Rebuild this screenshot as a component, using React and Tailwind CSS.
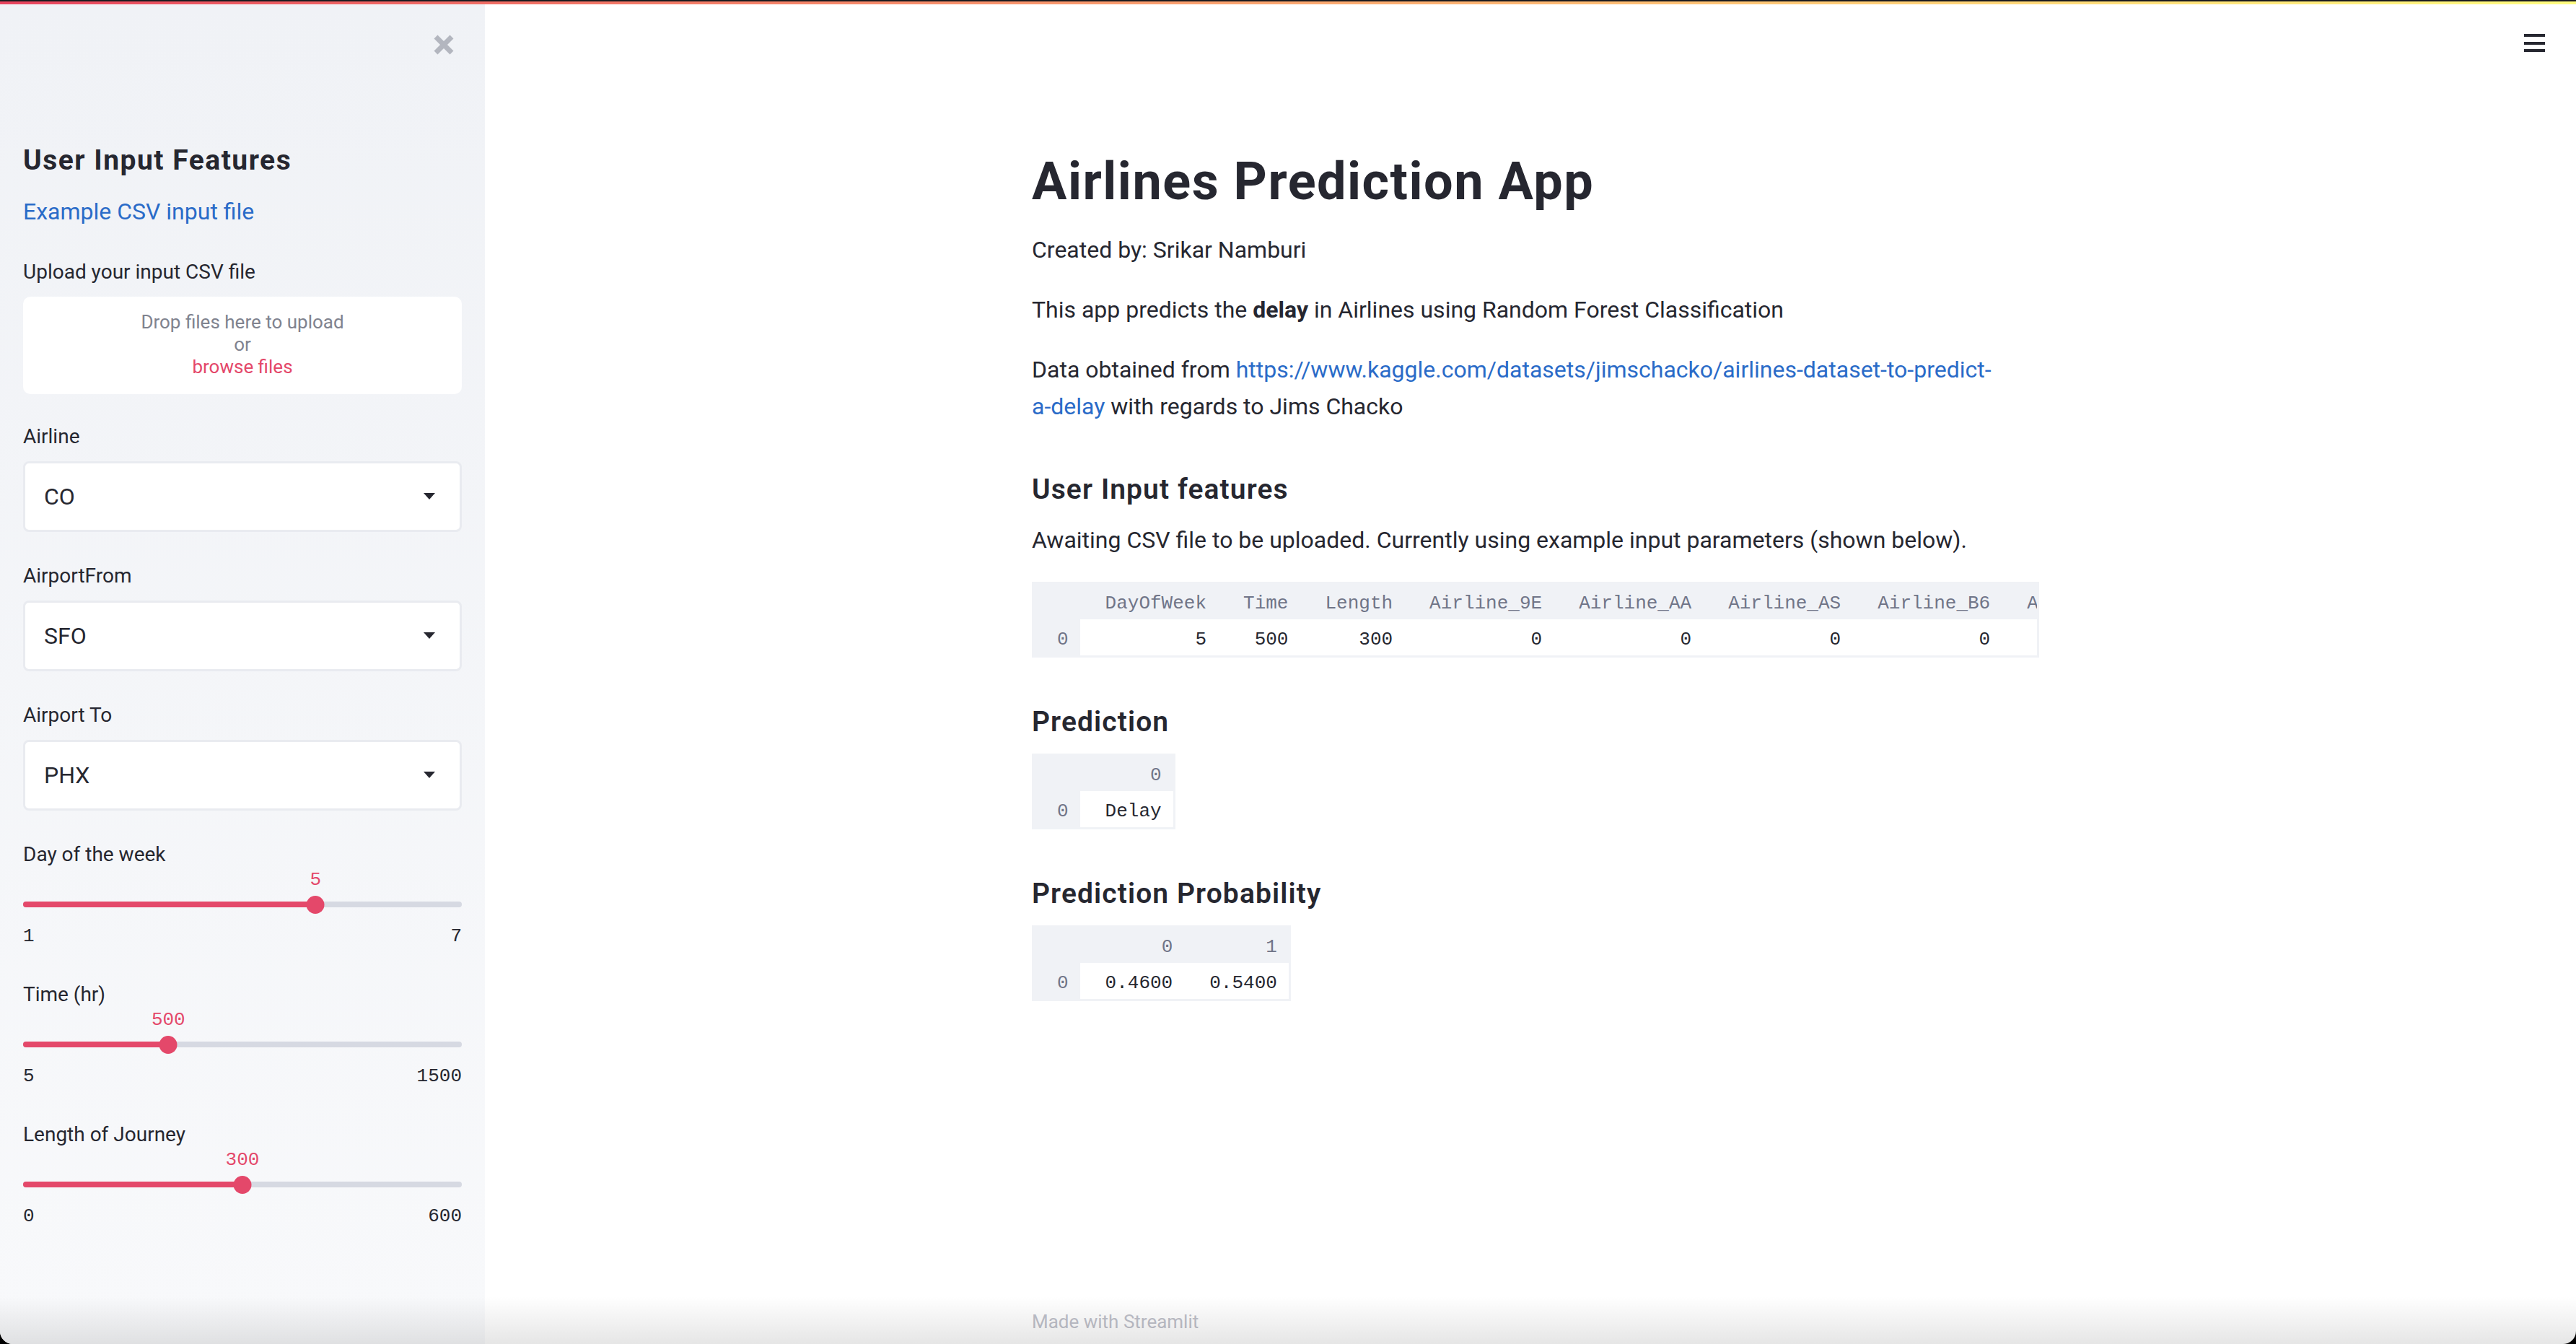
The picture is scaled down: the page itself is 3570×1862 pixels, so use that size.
const SANS = "font-['Roboto',_'Liberation_Sans',_sans-serif]";
const MONO = "font-['Liberation_Mono',_'DejaVu_Sans_Mono',_monospace]";

function CloseIcon() {
	return (
		<svg width="30" height="30" viewBox="0 0 30 30">
			<path d="M4 4 L26 26 M26 4 L4 26" stroke="#b3b6bf" strokeWidth="7" strokeLinecap="butt" />
		</svg>
	);
}

function Caret() {
	return (
		<svg width="16" height="10" viewBox="0 0 16 10">
			<path d="M0 0 H16 L8 9 Z" fill="#262730" />
		</svg>
	);
}

function SelectBox({ label, value }) {
	return (
		<div className="flex flex-col">
			<div className="text-[28px] leading-[36px] text-[#262730]">{label}</div>
			<div className="mt-[16px] h-[98px] rounded-[8px] border-[3px] border-[#e9ebf0] bg-white flex items-center justify-between pl-[26px] pr-[34px]">
				<span className="text-[32px] text-[#262730]">{value}</span>
				<Caret />
			</div>
		</div>
	);
}

function Slider({ label, value, min, max }) {
	const pct = ((value - min) / (max - min)) * 100;
	return (
		<div className="flex flex-col">
			<div className="text-[28px] leading-[36px] text-[#262730]">{label}</div>
			<div className="relative mt-[2px] h-[30px]">
				<span className={`absolute top-0 -translate-x-1/2 text-[26px] leading-[30px] text-[#e4486a] ${MONO}`} style={{ left: `${pct}%` }}>
					{value}
				</span>
			</div>
			<div className="relative mt-[7px] h-[24px] flex items-center">
				<div className="w-full h-[8px] rounded-full bg-[#d6d9e2]" />
				<div className="absolute left-0 h-[8px] rounded-full bg-[#e4486a]" style={{ width: `${pct}%` }} />
				<div className="absolute w-[25px] h-[25px] rounded-full bg-[#e4486a] -translate-x-1/2" style={{ left: `${pct}%` }} />
			</div>
			<div className={`mt-[17px] flex justify-between text-[26px] leading-[30px] text-[#262730] ${MONO}`}>
				<span>{min}</span>
				<span>{max}</span>
			</div>
		</div>
	);
}

function DataTable({ columns, rows, clip }) {
	const cell = "pl-[35px] pr-[16px] pb-[7px] align-bottom text-right whitespace-nowrap";
	return (
		<div className={`bg-[#f0f2f6] pr-[3px] pb-[3px] ${clip ? "w-[1396px]" : "self-start"}`}>
			<div className="overflow-hidden">
				<table className={`border-collapse text-[26px] leading-[30px] ${MONO}`}>
					<thead>
						<tr className="h-[52px]">
							<th className={cell} />
							{columns.map((c) => (
								<th key={c} className={`${cell} font-normal text-[#707588]`}>
									{c}
								</th>
							))}
						</tr>
					</thead>
					<tbody>
						{rows.map((r, i) => (
							<tr key={i} className="h-[50px]">
								<td className={`${cell} text-[#707588]`}>{i}</td>
								{r.map((v, j) => (
									<td key={j} className={`${cell} bg-white text-[#262730]`}>
										{v}
									</td>
								))}
							</tr>
						))}
					</tbody>
				</table>
			</div>
		</div>
	);
}

function App() {
	const inputCols = ["DayOfWeek", "Time", "Length", "Airline_9E", "Airline_AA", "Airline_AS", "Airline_B6", "Airline_CO", "Airline_DL", "Airline_EV"];
	const inputRow = ["5", "500", "300", "0", "0", "0", "0", "1", "0", "0"];

	return (
		<div className={`w-[3570px] h-[1862px] bg-black ${SANS}`}>
			<div className="relative w-full h-full bg-white rounded-b-[18px] overflow-hidden flex flex-col">
				{/* top decoration */}
				<div className="h-[2px] bg-[#1b1b1f]" />
				<div className="h-[4px] bg-linear-to-r from-[#e8445e] to-[#fffd80]" />

				<div className="flex flex-1">
					{/* Sidebar */}
					<aside className="w-[672px] bg-linear-to-b from-[#f0f2f6] to-[#f8f9fb] px-[32px] flex flex-col">
						<div className="mt-[41px] h-[30px] flex justify-end pr-[10px]">
							<CloseIcon />
						</div>
						<h2 className="mt-[122px] text-[39px] leading-[46px] font-bold tracking-[1.5px] text-[#262730]">User Input Features</h2>
						<a className="mt-[24px] text-[32px] leading-[48px] text-[#2a6bc8]">Example CSV input file</a>

						<div className="mt-[42px] text-[28px] leading-[36px] text-[#262730]">Upload your input CSV file</div>
						<div className="mt-[16px] h-[135px] rounded-[10px] bg-white flex flex-col items-center pt-[20px] text-[26px] leading-[31px]">
							<span className="text-[#80838f]">Drop files here to upload</span>
							<span className="text-[#80838f]">or</span>
							<span className="text-[#e4486a]">browse files</span>
						</div>

						<div className="mt-[41px] flex flex-col gap-[43px]">
							<SelectBox label="Airline" value="CO" />
							<SelectBox label="AirportFrom" value="SFO" />
							<SelectBox label="Airport To" value="PHX" />
						</div>
						<div className="mt-[43px] flex flex-col gap-[48px]">
							<Slider label="Day of the week" value={5} min={1} max={7} />
							<Slider label="Time (hr)" value={500} min={5} max={1500} />
							<Slider label="Length of Journey" value={300} min={0} max={600} />
						</div>
					</aside>

					{/* Main */}
					<main className="relative flex-1 flex flex-col items-center pl-[14px]">
						<div className="absolute top-[41px] right-[43px] flex flex-col gap-[6.5px]">
							<div className="w-[29px] h-[4px] bg-[#262730]" />
							<div className="w-[29px] h-[4px] bg-[#262730]" />
							<div className="w-[29px] h-[4px] bg-[#262730]" />
						</div>

						<div className="w-[1396px] flex flex-col text-[#262730]">
							<h1 className="mt-[203px] text-[72px] leading-[86px] font-bold tracking-[1.5px]">Airlines Prediction App</h1>
							<p className="mt-[26px] text-[32px] leading-[51px]">Created by: Srikar Namburi</p>
							<p className="mt-[32px] text-[32px] leading-[51px]">
								This app predicts the <b>delay</b> in Airlines using Random Forest Classification
							</p>
							<p className="mt-[32px] text-[32px] leading-[51px] w-[1346px]">
								Data obtained from{" "}
								<a className="text-[#2a6bc8]">https://www.kaggle.com/datasets/jimschacko/airlines-dataset-to-predict-a-delay</a> with regards to Jims Chacko
							</p>

							<h3 className="mt-[66px] text-[39px] leading-[46px] font-semibold tracking-[1.1px]">User Input features</h3>
							<p className="mt-[22px] text-[32px] leading-[51px]">Awaiting CSV file to be uploaded. Currently using example input parameters (shown below).</p>
							<div className="mt-[32px]">
								<DataTable columns={inputCols} rows={[inputRow]} clip />
							</div>

							<h3 className="mt-[66px] text-[39px] leading-[46px] font-semibold tracking-[1.1px]">Prediction</h3>
							<div className="mt-[21px] flex">
								<DataTable columns={["0"]} rows={[["Delay"]]} />
							</div>

							<h3 className="mt-[66px] text-[39px] leading-[46px] font-semibold tracking-[1.1px]">Prediction Probability</h3>
							<div className="mt-[21px] flex">
								<DataTable columns={["0", "1"]} rows={[["0.4600", "0.5400"]]} />
							</div>
						</div>

						<div className="mt-auto mb-[16px] w-[1396px] text-[26px] leading-[30px] text-[#bfc1ca]">Made with Streamlit</div>
					</main>
				</div>

				{/* window shade at the bottom edge */}
				<div className="pointer-events-none absolute left-0 right-0 bottom-0 h-[66px] bg-linear-to-b from-transparent to-black/10" />
			</div>
		</div>
	);
}

export default App;
